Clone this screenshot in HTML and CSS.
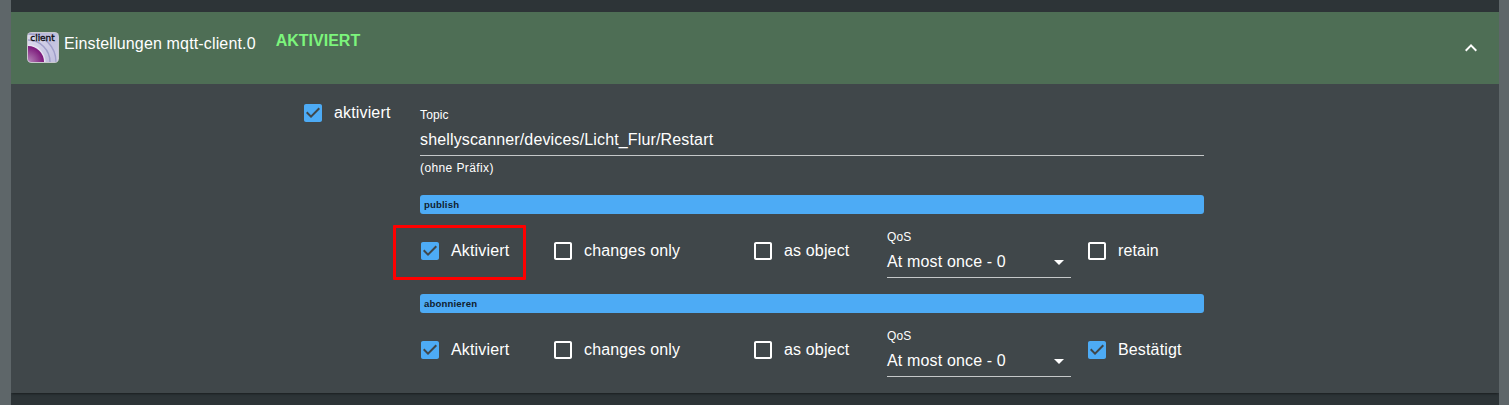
FILE: index.html
```
<!DOCTYPE html>
<html lang="de">
<head>
<meta charset="utf-8">
<title>Einstellungen mqtt-client.0</title>
<link rel="stylesheet" href="styles.css">
</head>
<body>
<svg class="defs" aria-hidden="true">
  <symbol id="checked" viewBox="0 0 24 24"><path d="M19 3H5c-1.11 0-2 .9-2 2v14c0 1.1.89 2 2 2h14c1.11 0 2-.9 2-2V5c0-1.1-.89-2-2-2zm-9 14l-5-5 1.41-1.41L10 14.17l7.59-7.59L19 8l-9 9z"/></symbol>
  <symbol id="unchecked" viewBox="0 0 24 24"><path d="M19 5v14H5V5h14m0-2H5c-1.1 0-2 .9-2 2v14c0 1.1.9 2 2 2h14c1.1 0 2-.9 2-2V5c0-1.1-.9-2-2-2z"/></symbol>
  <symbol id="arrow" viewBox="0 0 24 24"><path d="M7 10l5 5 5-5z"/></symbol>
</svg>
<main class="panel">
  <header class="panel-header">
    <svg class="logo" viewBox="0 0 32 32">
      <defs>
        <linearGradient id="bg" x1="0" y1="0" x2="1" y2="1"><stop offset="0" stop-color="#b2b2d6"/><stop offset="1" stop-color="#d0cfe6"/></linearGradient>
        <linearGradient id="ring" x1="0" y1="0" x2="1" y2="1"><stop offset="0" stop-color="#e9e8f5"/><stop offset="1" stop-color="#b4b1d6"/></linearGradient>
        <radialGradient id="core" cx="0" cy="1" r="1"><stop offset="0" stop-color="#b78abb"/><stop offset="1" stop-color="#7b1679"/></radialGradient>
        <clipPath id="tile"><rect x="1" y="1" width="30" height="29" rx="3"/></clipPath>
      </defs>
      <rect width="32" height="31" rx="4.500" fill="#c9c9cd"/>
      <g clip-path="url(#tile)">
        <rect x="1" y="1" width="30" height="30" fill="url(#bg)"/>
        <circle cx="1" cy="30" r="28" fill="url(#ring)" stroke="#a09fc9" stroke-width="1.500"/>
        <circle cx="1" cy="30" r="22" fill="url(#ring)" stroke="#a09fc9" stroke-width="1.500"/>
        <circle cx="1" cy="30" r="17.500" fill="#e6e3f1"/>
        <path d="M1 14A16 16 0 0 1 17 30H1z" fill="url(#core)"/>
      </g>
      <text class="logo-text" x="3.300" y="9" textLength="24.500">client</text>
    </svg>
    <h1 class="title">Einstellungen mqtt-client.0</h1>
    <strong class="status">AKTIVIERT</strong>
    <svg class="chevron" viewBox="0 0 24 24"><path d="M12 8l-6 6 1.410 1.410L12 10.830l4.590 4.580L18 14z"/></svg>
  </header>
  <section class="settings">
    <label class="check main-check"><svg class="on"><use href="#checked"/></svg><span>aktiviert</span></label>
    <div class="form">
      <div class="topic">
        <div class="caption">Topic</div>
        <div class="value">shellyscanner/devices/Licht_Flur/Restart</div>
        <div class="helper">(ohne Präfix)</div>
      </div>
      <div class="bar">publish</div>
      <div class="row">
        <label class="check"><svg class="on"><use href="#checked"/></svg><span>Aktiviert</span></label>
        <label class="check"><svg><use href="#unchecked"/></svg><span>changes only</span></label>
        <label class="check"><svg><use href="#unchecked"/></svg><span>as object</span></label>
        <div class="select">
          <div class="caption">QoS</div>
          <div class="value">At most once - 0<svg><use href="#arrow"/></svg></div>
        </div>
        <label class="check"><svg><use href="#unchecked"/></svg><span>retain</span></label>
        <div class="highlight"></div>
      </div>
      <div class="bar">abonnieren</div>
      <div class="row">
        <label class="check"><svg class="on"><use href="#checked"/></svg><span>Aktiviert</span></label>
        <label class="check"><svg><use href="#unchecked"/></svg><span>changes only</span></label>
        <label class="check"><svg><use href="#unchecked"/></svg><span>as object</span></label>
        <div class="select">
          <div class="caption">QoS</div>
          <div class="value">At most once - 0<svg><use href="#arrow"/></svg></div>
        </div>
        <label class="check"><svg class="on"><use href="#checked"/></svg><span>Bestätigt</span></label>
      </div>
    </div>
  </section>
</main>
</body>
</html>
```
FILE: styles.css
```
* { box-sizing: border-box; }
body {
  margin: 0;
  height: 405px;
  overflow: hidden;
  padding: 0 10px 0 11px;
  background: #5e6669;
  color: #fff;
  font: 16px/24px "Liberation Sans", Arial, sans-serif;
  letter-spacing: 0.15px;
}
.defs { position: absolute; width: 0; height: 0; }
svg { fill: currentColor; flex: none; }
.panel { height: 405px; padding-top: 12px; background: #2d3437; overflow: hidden; }
.panel-header {
  display: flex;
  align-items: flex-start;
  height: 72px;
  padding: 0 16px;
  background: #4e6e55;
}
.logo { width: 32px; height: 32px; margin-top: 20px; }
.logo-text { font: 9px "DejaVu Sans", sans-serif; letter-spacing: 0; fill: #08080c; stroke: #08080c; stroke-width: 0.3px; }
.title { margin: 20px 0 0 5px; font-size: 16px; font-weight: 400; line-height: 24px; }
.status { margin: 17px 0 0 20px; color: #7cf57c; letter-spacing: 0; }
.chevron { width: 24px; height: 24px; margin: 24px 0 0 auto; }
.settings {
  display: flex;
  height: 309px;
  padding-left: 290px;
  background: #40474a;
  box-shadow: 0 2px 2px -1px #191e20;
}
.main-check { width: 119px; margin-top: 17px; }
.form { width: 784px; }
.check { display: flex; align-items: center; height: 24px; gap: 9px; }
.check svg { width: 24px; height: 24px; }
.check .on { color: #4dabf5; }
.check span { white-space: nowrap; }
.topic { height: 111px; padding-top: 23px; }
.caption { font-size: 12px; line-height: 16px; }
.value {
  display: flex;
  align-items: center;
  justify-content: space-between;
  height: 33px;
  padding-top: 2px;
  border-bottom: 1px solid #c5c8c9;
}
.helper { margin-top: 2px; font-size: 12px; line-height: 20px; letter-spacing: 0.4px; }
.bar {
  height: 19px;
  padding-left: 4px;
  border-radius: 3px;
  background: #4dabf5;
  color: #10212e;
  font-size: 9.6px;
  font-weight: 700;
  line-height: 19px;
  letter-spacing: 0.15px;
}
.row {
  position: relative;
  display: grid;
  grid-template-columns: 133px 200px 136px 198px 119px;
  height: 80px;
  margin-left: -2px;
  padding-top: 25px;
}
.select { width: 184px; margin-top: -10px; }
.select .value svg { width: 24px; height: 24px; }
.highlight {
  position: absolute;
  top: 11px;
  left: -25px;
  width: 133px;
  height: 55px;
  border: 3px solid #f00;
  border-radius: 1px;
}
```
